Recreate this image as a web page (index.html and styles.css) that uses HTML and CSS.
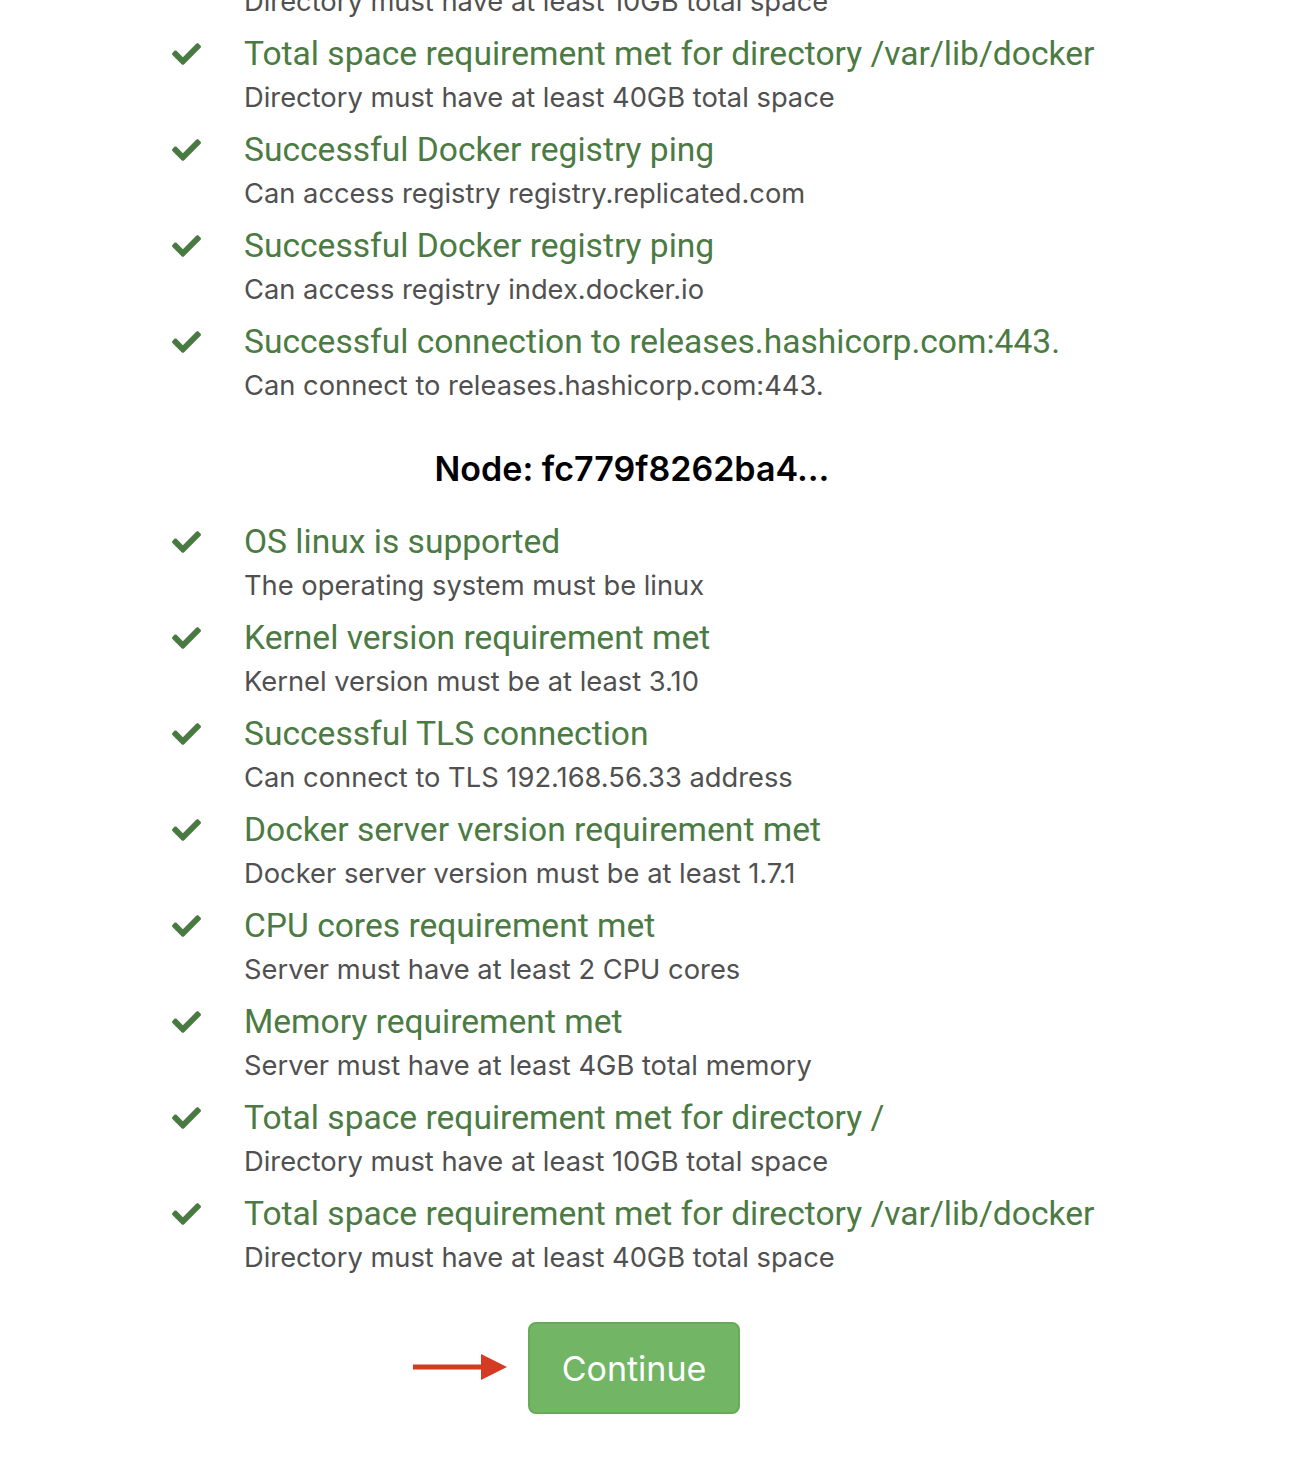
FILE: index.html
```html
<!DOCTYPE html>
<html>
<head>
<meta charset="utf-8">
<link rel="stylesheet" href="styles.css">
</head>
<body>
<main class="page">
  <ul class="checks checks-first">
    <li class="check">
      <svg class="icon" viewBox="0 64 512 384"><path d="M173.898 439.404l-166.4-166.4c-9.997-9.997-9.997-26.206 0-36.204l36.203-36.204c9.997-9.998 26.207-9.998 36.204 0L192 312.69 432.095 72.596c9.997-9.997 26.207-9.997 36.204 0l36.203 36.204c9.997 9.997 9.997 26.206 0 36.204l-294.4 294.401c-9.998 9.997-26.207 9.997-36.204-.001z"/></svg>
      <div class="text"><div class="title">Total space requirement met for directory /</div><div class="desc">Directory must have at least 10GB total space</div></div>
    </li>
    <li class="check">
      <svg class="icon" viewBox="0 64 512 384"><path d="M173.898 439.404l-166.4-166.4c-9.997-9.997-9.997-26.206 0-36.204l36.203-36.204c9.997-9.998 26.207-9.998 36.204 0L192 312.69 432.095 72.596c9.997-9.997 26.207-9.997 36.204 0l36.203 36.204c9.997 9.997 9.997 26.206 0 36.204l-294.4 294.401c-9.998 9.997-26.207 9.997-36.204-.001z"/></svg>
      <div class="text"><div class="title">Total space requirement met for directory /var/lib/docker</div><div class="desc">Directory must have at least 40GB total space</div></div>
    </li>
    <li class="check">
      <svg class="icon" viewBox="0 64 512 384"><path d="M173.898 439.404l-166.4-166.4c-9.997-9.997-9.997-26.206 0-36.204l36.203-36.204c9.997-9.998 26.207-9.998 36.204 0L192 312.69 432.095 72.596c9.997-9.997 26.207-9.997 36.204 0l36.203 36.204c9.997 9.997 9.997 26.206 0 36.204l-294.4 294.401c-9.998 9.997-26.207 9.997-36.204-.001z"/></svg>
      <div class="text"><div class="title">Successful Docker registry ping</div><div class="desc">Can access registry registry.replicated.com</div></div>
    </li>
    <li class="check">
      <svg class="icon" viewBox="0 64 512 384"><path d="M173.898 439.404l-166.4-166.4c-9.997-9.997-9.997-26.206 0-36.204l36.203-36.204c9.997-9.998 26.207-9.998 36.204 0L192 312.69 432.095 72.596c9.997-9.997 26.207-9.997 36.204 0l36.203 36.204c9.997 9.997 9.997 26.206 0 36.204l-294.4 294.401c-9.998 9.997-26.207 9.997-36.204-.001z"/></svg>
      <div class="text"><div class="title">Successful Docker registry ping</div><div class="desc">Can access registry index.docker.io</div></div>
    </li>
    <li class="check">
      <svg class="icon" viewBox="0 64 512 384"><path d="M173.898 439.404l-166.4-166.4c-9.997-9.997-9.997-26.206 0-36.204l36.203-36.204c9.997-9.998 26.207-9.998 36.204 0L192 312.69 432.095 72.596c9.997-9.997 26.207-9.997 36.204 0l36.203 36.204c9.997 9.997 9.997 26.206 0 36.204l-294.4 294.401c-9.998 9.997-26.207 9.997-36.204-.001z"/></svg>
      <div class="text"><div class="title">Successful connection to releases.hashicorp.com:443.</div><div class="desc">Can connect to releases.hashicorp.com:443.</div></div>
    </li>
  </ul>

  <h2 class="node">Node: fc779f8262ba4...</h2>

  <ul class="checks">
    <li class="check">
      <svg class="icon" viewBox="0 64 512 384"><path d="M173.898 439.404l-166.4-166.4c-9.997-9.997-9.997-26.206 0-36.204l36.203-36.204c9.997-9.998 26.207-9.998 36.204 0L192 312.69 432.095 72.596c9.997-9.997 26.207-9.997 36.204 0l36.203 36.204c9.997 9.997 9.997 26.206 0 36.204l-294.4 294.401c-9.998 9.997-26.207 9.997-36.204-.001z"/></svg>
      <div class="text"><div class="title">OS linux is supported</div><div class="desc">The operating system must be linux</div></div>
    </li>
    <li class="check">
      <svg class="icon" viewBox="0 64 512 384"><path d="M173.898 439.404l-166.4-166.4c-9.997-9.997-9.997-26.206 0-36.204l36.203-36.204c9.997-9.998 26.207-9.998 36.204 0L192 312.69 432.095 72.596c9.997-9.997 26.207-9.997 36.204 0l36.203 36.204c9.997 9.997 9.997 26.206 0 36.204l-294.4 294.401c-9.998 9.997-26.207 9.997-36.204-.001z"/></svg>
      <div class="text"><div class="title">Kernel version requirement met</div><div class="desc">Kernel version must be at least 3.10</div></div>
    </li>
    <li class="check">
      <svg class="icon" viewBox="0 64 512 384"><path d="M173.898 439.404l-166.4-166.4c-9.997-9.997-9.997-26.206 0-36.204l36.203-36.204c9.997-9.998 26.207-9.998 36.204 0L192 312.69 432.095 72.596c9.997-9.997 26.207-9.997 36.204 0l36.203 36.204c9.997 9.997 9.997 26.206 0 36.204l-294.4 294.401c-9.998 9.997-26.207 9.997-36.204-.001z"/></svg>
      <div class="text"><div class="title">Successful TLS connection</div><div class="desc">Can connect to TLS 192.168.56.33 address</div></div>
    </li>
    <li class="check">
      <svg class="icon" viewBox="0 64 512 384"><path d="M173.898 439.404l-166.4-166.4c-9.997-9.997-9.997-26.206 0-36.204l36.203-36.204c9.997-9.998 26.207-9.998 36.204 0L192 312.69 432.095 72.596c9.997-9.997 26.207-9.997 36.204 0l36.203 36.204c9.997 9.997 9.997 26.206 0 36.204l-294.4 294.401c-9.998 9.997-26.207 9.997-36.204-.001z"/></svg>
      <div class="text"><div class="title">Docker server version requirement met</div><div class="desc">Docker server version must be at least 1.7.1</div></div>
    </li>
    <li class="check">
      <svg class="icon" viewBox="0 64 512 384"><path d="M173.898 439.404l-166.4-166.4c-9.997-9.997-9.997-26.206 0-36.204l36.203-36.204c9.997-9.998 26.207-9.998 36.204 0L192 312.69 432.095 72.596c9.997-9.997 26.207-9.997 36.204 0l36.203 36.204c9.997 9.997 9.997 26.206 0 36.204l-294.4 294.401c-9.998 9.997-26.207 9.997-36.204-.001z"/></svg>
      <div class="text"><div class="title">CPU cores requirement met</div><div class="desc">Server must have at least 2 CPU cores</div></div>
    </li>
    <li class="check">
      <svg class="icon" viewBox="0 64 512 384"><path d="M173.898 439.404l-166.4-166.4c-9.997-9.997-9.997-26.206 0-36.204l36.203-36.204c9.997-9.998 26.207-9.998 36.204 0L192 312.69 432.095 72.596c9.997-9.997 26.207-9.997 36.204 0l36.203 36.204c9.997 9.997 9.997 26.206 0 36.204l-294.4 294.401c-9.998 9.997-26.207 9.997-36.204-.001z"/></svg>
      <div class="text"><div class="title">Memory requirement met</div><div class="desc">Server must have at least 4GB total memory</div></div>
    </li>
    <li class="check">
      <svg class="icon" viewBox="0 64 512 384"><path d="M173.898 439.404l-166.4-166.4c-9.997-9.997-9.997-26.206 0-36.204l36.203-36.204c9.997-9.998 26.207-9.998 36.204 0L192 312.69 432.095 72.596c9.997-9.997 26.207-9.997 36.204 0l36.203 36.204c9.997 9.997 9.997 26.206 0 36.204l-294.4 294.401c-9.998 9.997-26.207 9.997-36.204-.001z"/></svg>
      <div class="text"><div class="title">Total space requirement met for directory /</div><div class="desc">Directory must have at least 10GB total space</div></div>
    </li>
    <li class="check">
      <svg class="icon" viewBox="0 64 512 384"><path d="M173.898 439.404l-166.4-166.4c-9.997-9.997-9.997-26.206 0-36.204l36.203-36.204c9.997-9.998 26.207-9.998 36.204 0L192 312.69 432.095 72.596c9.997-9.997 26.207-9.997 36.204 0l36.203 36.204c9.997 9.997 9.997 26.206 0 36.204l-294.4 294.401c-9.998 9.997-26.207 9.997-36.204-.001z"/></svg>
      <div class="text"><div class="title">Total space requirement met for directory /var/lib/docker</div><div class="desc">Directory must have at least 40GB total space</div></div>
    </li>
  </ul>

  <div class="actions">
    <button class="btn-continue" type="button">
      <svg class="arrow" viewBox="0 0 94 26"><rect x="0" y="10.5" width="70" height="5"/><polygon points="68,0 94,13 68,26"/></svg>
      Continue
    </button>
  </div>
</main>
</body>
</html>
```

FILE: styles.css
```css
html, body {
  margin: 0;
  padding: 0;
  background: #ffffff;
  overflow: hidden;
}

.page {
  width: 920px;
  margin-left: 172px;
  font-family: Roboto, "Liberation Sans", sans-serif;
}

.checks {
  list-style: none;
  margin: 0;
  padding: 0;
  display: flex;
  flex-direction: column;
  gap: 12px;
}

.checks-first {
  margin-top: -62px;
}

.check {
  display: flex;
  align-items: flex-start;
}

.icon {
  width: 29px;
  height: 22px;
  fill: #497a42;
  margin-top: 9px;
  margin-right: 43px;
  flex: none;
}

.text {
  display: flex;
  flex-direction: column;
  gap: 4px;
  white-space: nowrap;
}

.title {
  font-family: Roboto, "Liberation Sans", sans-serif;
  font-size: 33.6px;
  line-height: 40px;
  color: #4b7b43;
}

.desc {
  font-family: Inter, "Noto Sans", sans-serif;
  font-size: 27.3px;
  line-height: 40px;
  color: #505050;
}

.node {
  margin: 43px 0 33px;
  text-align: center;
  font-family: Inter, "Liberation Sans", sans-serif;
  font-weight: 600;
  font-size: 34px;
  line-height: 40px;
  color: #000;
}

.actions {
  display: flex;
  justify-content: center;
  margin-top: 44px;
}

.btn-continue {
  position: relative;
  width: 212px;
  height: 92px;
  background: #72b565;
  border: 2px solid #66ab59;
  border-radius: 8px;
  color: #ffffff;
  font-family: Inter, "Liberation Sans", sans-serif;
  font-size: 34px;
  padding: 0;
  margin-left: 4px;
}

.arrow {
  position: absolute;
  right: calc(100% + 23px);
  top: 50%;
  margin-top: -14px;
  width: 94px;
  height: 26px;
  fill: #d33c22;
}
```
